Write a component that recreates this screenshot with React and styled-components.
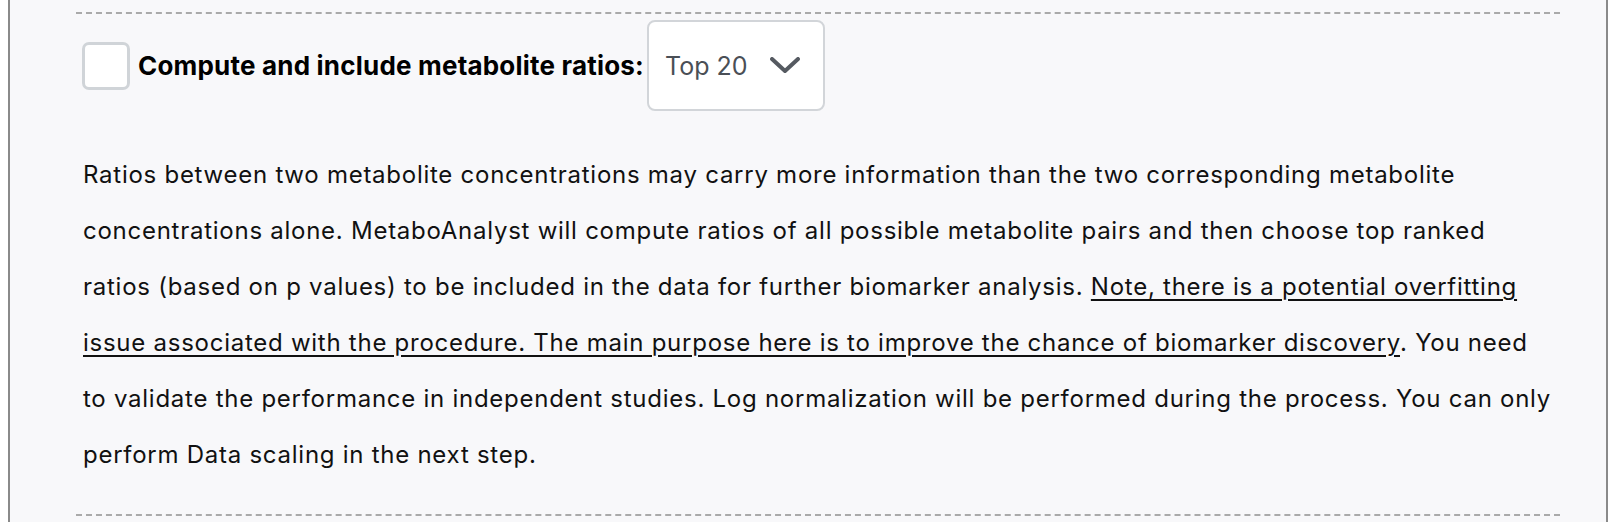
import React from "react";
import styled, { createGlobalStyle } from "styled-components";

const Global = createGlobalStyle`
  html, body { margin: 0; padding: 0; background: #ffffff; }
  body { margin: 0 0 0 8px; font-family: Inter, "Liberation Sans", Arial, sans-serif; }
  #root { height: 522px; overflow: hidden; }
`;

const Panel = styled.div`
  width: 1600px;
  height: 522px;
  box-sizing: border-box;
  background: #f8f8fa;
  border-left: 2px solid #8a8a8a;
  border-right: 2px solid #8a8a8a;
  padding-top: 12px;
`;

const Section = styled.section`
  margin-left: 66px;
  width: 1484px;
  border-top: 2px dashed #aaaaaa;
  border-bottom: 2px dashed #aaaaaa;
  padding: 6px 0 31px;
`;

const OptionRow = styled.div`
  display: flex;
  align-items: center;
  padding-left: 6px;
  height: 91px;
`;

const Check = styled.span`
  width: 48px;
  height: 48px;
  box-sizing: border-box;
  border: 3px solid #d0d4d8;
  border-radius: 7px;
  background: #ffffff;
  flex: none;
`;

const Label = styled.label`
  margin-left: 8px;
  font-weight: 700;
  font-size: 26px;
  letter-spacing: 0.2px;
  color: #000;
  white-space: nowrap;
`;

const Select = styled.div`
  margin-left: 3px;
  width: 178px;
  height: 91px;
  box-sizing: border-box;
  border: 2px solid #d2d5d9;
  border-radius: 8px;
  background: #ffffff;
  display: flex;
  align-items: center;
  padding-left: 16px;
  font-size: 25px;
  color: #4a4f56;
  gap: 22px;
`;

const Chevron = styled.svg`
  width: 30px;
  height: 17px;
  flex: none;
`;

const Description = styled.p`
  margin: 36px 0 0;
  padding: 0 6px 0 7px;
  font-size: 24px;
  letter-spacing: 0.74px;
  line-height: 56px;
  color: #111;
`;

const Note = styled.span`
  text-decoration: underline;
  text-underline-offset: 4px;
  text-decoration-thickness: 2px;
`;

export default function App() {
  return (
    <>
      <Global />
      <Panel>
        <Section>
          <OptionRow>
            <Check />
            <Label>Compute and include metabolite ratios:</Label>
            <Select>
              <span>Top 20</span>
              <Chevron viewBox="0 0 30 17" fill="none">
                <path d="M2 2 L15 14 L28 2" stroke="#555a61" strokeWidth="4" strokeLinecap="round" strokeLinejoin="round" />
              </Chevron>
            </Select>
          </OptionRow>
          <Description>
            Ratios between two metabolite concentrations may carry more information than the two corresponding metabolite
            concentrations alone. MetaboAnalyst will compute ratios of all possible metabolite pairs and then choose top ranked
            ratios (based on p values) to be included in the data for further biomarker analysis.{" "}
            <Note>
              Note, there is a potential overfitting issue associated with the procedure. The main purpose here is to improve the
              chance of biomarker discovery
            </Note>
            . You need to validate the performance in independent studies. Log normalization will be performed during the
            process. You can only perform Data scaling in the next step.
          </Description>
        </Section>
      </Panel>
    </>
  );
}
